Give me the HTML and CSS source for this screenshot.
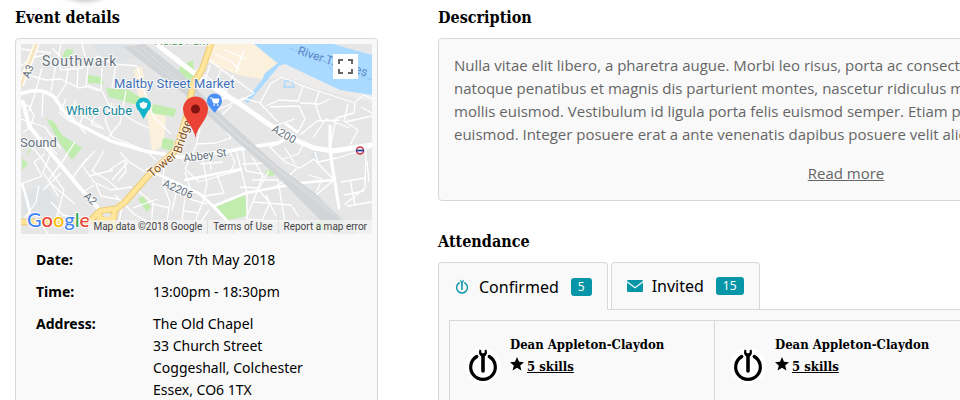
FILE: index.html
```html
<!DOCTYPE html>
<html lang="en">
<head>
<meta charset="utf-8">
<title>Event</title>
<link rel="stylesheet" href="styles.css">
</head>
<body>
<svg class="symbols" aria-hidden="true">
  <symbol id="power" viewBox="0 0 36 36">
    <path d="M11.8 8.5A12.3 12.3 0 1 0 24.2 8.5" fill="none" stroke="currentColor" stroke-width="3.2" stroke-linecap="round"/>
    <path d="M18 8V23" fill="none" stroke="currentColor" stroke-width="3.6" stroke-linecap="round"/>
    <path d="M14.6 1.6C13.3 4.8 14.3 8.6 18 8.8C21.7 8.6 22.7 4.8 21.4 1.6L19.7 2.2V4.6L18 5.4L16.3 4.6V2.2Z" fill="currentColor"/>
  </symbol>
  <symbol id="star" viewBox="0 0 14 14">
    <path d="M7 0L9 4.8L14 5.2L10.2 8.5L11.4 13.5L7 10.8L2.6 13.5L3.8 8.5L0 5.2L5 4.8Z" fill="currentColor"/>
  </symbol>
</svg>
<div class="page">
  <div class="header-shadow"></div>
  <section class="details">
    <h2>Event details</h2>
    <div class="panel details-panel">
      <div class="map">
        <svg class="map-art" viewBox="21 44 351 190" role="img" aria-label="Map">
          <rect x="21" y="44" width="351" height="190" fill="#e6e6e6"/>
          <g fill="#dfe3e6">
            <path d="M92 44H128L139 55L119 65L100 56ZM22 190L45 187L58 202L54 220L22 213Z"/>
            <path d="M313 150L322 152L320 163L309 157Z"/>
          </g>
          <path d="M274 63L285 62L310 71L330 81L372 94V102L346 96L315 88L285 76L270 79Z" fill="#eeeceb"/>
          <g fill="#fbf1dd">
            <path d="M211 44H254L277 64L266 80L238 75L203 60Z"/>
            <path d="M134 70L142 66L148 101L166 115L164 145L152 152L148 120L139 99Z"/>
          </g>
          <g fill="#c0ecae">
            <path d="M66 49L74 50L68 59L62 57ZM88 75L101 77L104 84L88 83ZM106 88L128 90L143 99L141 106L109 97Z"/>
            <path d="M153 104L176 109L174 117L151 113ZM180 67L193 60L195 79L184 82L178 74Z"/>
            <path d="M46 118L54 122L62 135L82 148L72 160L59 142ZM22 158L28 164L22 170ZM27 152L32 147L30 151L26 155Z"/>
            <path d="M163 138L174 140L172 151L161 148ZM138 199L143 196L151 207L147 212ZM216 206L245 195L247 216L228 220Z"/>
            <path d="M265 172L271 168L275 175L268 176ZM315 222L325 222L328 230H315Z"/>
          </g>
          <path d="M254 44H333L372 55V95L340 90L285 64L279 66L248 103L245 101L262 80L265 73L278 63Z" fill="#aadaff"/>
          <path d="M285 81L292 81L294 87L284 87Z" fill="none" stroke="#aadaff" stroke-width="1.5"/>
          <path d="M289 48L310 56L372 80M324 60L335 74" fill="none" stroke="#86b8ea" stroke-width=".7" stroke-dasharray="5 2"/>

          <g fill="none" stroke="#fff" stroke-width="1.3" stroke-linejoin="round">
            <path d="M21 66L31 58L44 55L58 62L61 70L82 68L98 56L113 64L137 66L143 87L153 116L171 134"/>
            <path d="M28 75L46 80L61 79L79 88L90 86L102 91L109 105L134 121L149 128M42 68L36 90M56 64L51 91M68 70L66 84L55 101M78 69L77 88M88 65L86 86L99 91M52 48L61 57M61 44L57 62M82 44L86 60M102 68L101 90M116 64L112 88"/>
            <path d="M59 109L84 116L104 129M66 99L60 113L69 121M76 100L71 116L86 134M88 105L80 123M101 106L91 124L100 128M112 103L105 120L112 137L145 150L156 160M126 91L120 123L106 140"/>
            <path d="M21 104L29 106L34 116L30 128L23 132M36 91L29 111M43 93L42 117M21 119L45 127L61 149M45 154L34 162L42 176L21 184M40 137L57 154M21 140L36 151L64 190M50 155L43 172L59 197M67 155L48 181L75 204M61 173L43 190M75 142L65 157M87 158L73 177L82 191M95 151L82 165L94 182L111 190L132 187"/>
            <path d="M104 151L92 171L106 179L119 190M120 152L128 161L145 172M109 170L125 160L126 171L118 181M89 176L113 170M96 184L101 196L121 200M82 193L94 185M128 162L112 180M115 195L135 215L149 222L156 231M122 207L119 222M137 190L153 203L151 227M133 208L157 199M51 202L63 215L81 219M39 186L36 202L22 222M64 190L55 224M34 213L48 234"/>
            <path d="M21 49L51 53M204 56L225 72L254 93L237 103M196 70L218 84L235 101M210 65L205 80L191 81M221 70L214 85M233 75L226 92M244 50L236 72M225 50L246 59M215 54L231 61L239 70M196 90L217 110L243 98L260 103L278 122M232 105L218 119"/>
            <path d="M260 103L271 83L282 77L303 86L298 101L279 100L266 106M270 107L299 106L305 119L298 132M303 86L318 91L355 103L354 113L336 118L330 149M300 103L320 104L330 99M319 92L315 103L321 121M348 104L344 121L358 130L350 145M355 102L364 95L372 99M300 135L317 121L340 120M313 138L326 119L350 128M295 119L274 126M361 107L372 113M345 122L372 116"/>
            <path d="M200 128L196 146L185 169L199 182L216 177L241 170M197 144L216 143L231 138L220 122M202 155L207 184L204 196M200 164L223 162M209 152L211 170M229 150L235 162L230 173M236 150L247 193L247 220M217 175L224 193L204 196M242 144L246 171L263 174L255 197L246 218M242 164L270 163L287 180L272 188L245 193M252 180L278 180L285 223M252 157L264 178M269 171L259 188L240 187M257 188L270 203L261 222"/>
            <path d="M281 143L270 147L285 162L300 168L314 159L334 180L316 195L294 183M303 145L298 154L283 159M285 148L295 164M315 152L318 162L337 158L370 148M297 168L281 184M309 175L322 179L317 191M330 159L334 182M344 205L365 188L366 150M341 182L365 178M344 195L364 191M347 206L372 202M350 180L355 205M367 161L369 182"/>
            <path d="M254 202L291 205L299 217M266 195L276 216M185 172L190 188M164 165L163 184L170 202L166 228M178 185L172 211M153 204L169 208M186 189L181 229M205 197L196 219L201 228M209 210L199 224M189 199L207 204M246 219L285 222M184 211L199 213"/>
          </g>
          <g fill="none" stroke="#fff" stroke-linecap="round" stroke-linejoin="round">
            <path d="M20 94Q41 86 54 97L66 114L72 121L111 141L145 151L181 157L223 152L251 147L278 143L292 135" stroke-width="3.5"/>
            <path d="M23 102L29 126L46 147L80 188L99 209" stroke-width="4"/>
            <path d="M159 46L190 70L219 91L240 104L267 123L288 137L314 148L333 151L372 145" stroke-width="5"/>
            <path d="M330 126L330 150L339 208M147 169L200 194L214 207L228 222L239 233M286 124L297 132M227 96L211 106L203 116" stroke-width="3"/>
            <path d="M214 206L246 193L300 183L333 180M185 180L220 173L241 169M22 184Q29 204 31 221" stroke-width="2.5"/>
          </g>
          <path d="M36 44L20 86M211 44L202 68L193 82" fill="none" stroke="#f6e5be" stroke-width="6"/>
          <path d="M34 44L19 84M39 44L23 86" fill="none" stroke="#fff" stroke-width="1.500"/>
          <path d="M123 47L145 44L178 70L223 116L278 166L316 194L357 234H334L275 174L242 146L183 93Z" fill="#d2d5d8"/>
          <path d="M133 47L178 82L227 127L281 173L351 228M141 47L187 86L239 138L291 179L348 222" fill="none" stroke="#e2e4e6" stroke-width=".7"/>
          <g fill="none" stroke-linecap="round" stroke-linejoin="round">
            <path d="M211 44L202 70L193 84L187 115L176 150L147 177L125 202L115 210L112 229M21 222L90 221L100 211L114 209M98 213L101 220L113 217" stroke="#edca75" stroke-width="6.5"/>
            <path d="M211 44L202 70L193 84L187 115L176 150L147 177L125 202L115 210L112 229M21 222L90 221L100 211L114 209M98 213L101 220L113 217" stroke="#ffe69a" stroke-width="4.5"/>
          </g>
          <ellipse cx="107" cy="215" rx="4" ry="2" fill="#e6e6e6"/>
          <circle cx="360" cy="150.500" r="3.500" fill="#fff" stroke="#d1344a" stroke-width="1.5"/>
          <path d="M356 150.500H364" stroke="#20459c" stroke-width="1.8"/>

          <g class="map-label">
            <text x="42" y="66" font-size="14" letter-spacing="1">Southwark</text>
            <text x="20" y="147" font-size="13">Sound</text>
            <text x="29" y="79" font-size="11" transform="rotate(-68 29 79)">A3</text>
            <text x="83" y="197" font-size="11" transform="rotate(42 83 197)">A2</text>
            <text x="271" y="131" font-size="11" transform="rotate(30 271 131)">A200</text>
            <text x="162" y="186" font-size="11" transform="rotate(24 162 186)">A2206</text>
            <text x="184" y="162" font-size="11" transform="rotate(-8 184 162)">Abbey St</text>
            <text class="blue" x="114" y="88" font-size="13">Maltby Street Market</text>
            <text class="teal" x="66" y="115" font-size="13">White Cube</text>
            <text class="river" x="297" y="54" font-size="12" transform="rotate(18 297 54)">River Thames</text>
            <text class="brown" x="152" y="178" font-size="12" transform="rotate(-40 152 178)">Tower</text>
            <text class="brown" x="181" y="154" font-size="12" transform="rotate(-72 181 154)">Bridge</text>
            <text class="green" x="154" y="45" font-size="11">Fields Park</text>
          </g>
          <path d="M143.500 119L139 111A7.500 7.500 0 1 1 148 111Z" fill="#12b5cb"/>
          <path d="M140 105a1.400 1.400 0 1 1 2-2a1.400 1.400 0 1 1 3 0a1.400 1.400 0 1 1 2 2C147 110 140 110 140 105Z" fill="#fff"/>
          <path d="M214.500 113L209 106A7.500 7.500 0 1 1 220 106Z" fill="#4a90f5"/>
          <path d="M210 98H212L213.500 103H218L219 99H212.500" fill="#fff" stroke="#fff"/>
          <path d="M213.500 105h1.400M217 105h1.400" stroke="#fff" stroke-width="1.500"/>
          <path d="M195.500 138C194 126 183 120 183 109A12.500 12.500 0 0 1 208 109C208 120 197 126 195.500 138Z" fill="#ea4335"/>
          <circle cx="195.500" cy="109" r="4.500" fill="#811411"/>
          <text class="logo" x="27" y="227"><tspan fill="#4285f4">G</tspan><tspan fill="#ea4335">o</tspan><tspan fill="#fbbc05">o</tspan><tspan fill="#4285f4">g</tspan><tspan fill="#34a853">l</tspan><tspan fill="#ea4335">e</tspan></text>
        </svg>
        <button class="fullscreen" type="button" aria-label="Full screen">
          <svg viewBox="0 0 15 15" width="15" height="15"><path d="M1 5V1H5M10 1H14V5M14 10V14H10M5 14H1V10" fill="none" stroke="#666" stroke-width="2"/></svg>
        </button>
        <div class="map-credits"><span>Map data ©2018 Google</span><a href="#">Terms of Use</a><a href="#">Report a map error</a></div>
      </div>
      <dl class="facts">
        <dt>Date:</dt><dd>Mon 7th May 2018</dd>
        <dt>Time:</dt><dd>13:00pm - 18:30pm</dd>
        <dt>Address:</dt><dd>The Old Chapel<br>33 Church Street<br>Coggeshall, Colchester<br>Essex, CO6 1TX</dd>
      </dl>
    </div>
  </section>
  <div class="main">
    <section>
      <h2>Description</h2>
      <div class="panel description">
        <p>Nulla vitae elit libero, a pharetra augue. Morbi leo risus, porta ac consectetur ac, vestibulum at eros. Cum sociis natoque penatibus et magnis dis parturient montes, nascetur ridiculus mus. Etiam porta sem malesuada magna mollis euismod. Vestibulum id ligula porta felis euismod semper. Etiam porta sem malesuada magna mollis euismod. Integer posuere erat a ante venenatis dapibus posuere velit aliquet.</p>
        <a class="more" href="#">Read more</a>
      </div>
    </section>
    <section>
      <h2 class="attendance-title">Attendance</h2>
      <div class="tabs" role="tablist">
        <button class="tab selected" type="button" role="tab" aria-selected="true"><svg class="tab-icon"><use href="#power"/></svg>Confirmed<span class="count">5</span></button>
        <button class="tab" type="button" role="tab" aria-selected="false"><svg class="tab-icon" viewBox="0 0 16 16"><path d="M0 3A1 1 0 0 1 1 2H15A1 1 0 0 1 16 3L8 9Z" fill="currentColor"/><path d="M0 4.500L8 10.500L16 4.500V13A1 1 0 0 1 15 14H1A1 1 0 0 1 0 13Z" fill="currentColor"/></svg>Invited<span class="count">15</span></button>
      </div>
      <div class="tab-panel">
        <ul class="people">
          <li><svg class="avatar"><use href="#power"/></svg><div><h3>Dean Appleton-Claydon</h3><svg class="star"><use href="#star"/></svg><a href="#">5 skills</a></div></li>
          <li><svg class="avatar"><use href="#power"/></svg><div><h3>Dean Appleton-Claydon</h3><svg class="star"><use href="#star"/></svg><a href="#">5 skills</a></div></li>
          <li></li>
        </ul>
      </div>
    </section>
  </div>
</div>
</body>
</html>
```
FILE: styles.css
```css
* { box-sizing: border-box; }

body {
  margin: 0;
  height: 100vh;
  overflow: hidden;
  background: #fff;
  color: #000;
  font: 14px/22px "Noto Sans", "Open Sans", sans-serif;
}

.symbols { display: none; }

.page {
  position: relative;
  display: grid;
  grid-template-columns: 363fr 816fr;
  gap: 60px;
  min-width: 1269px;
  padding: 6px 15px 0;
}

.header-shadow {
  position: absolute;
  top: -76px;
  left: 45px;
  width: 80px;
  height: 76px;
  border-radius: 50%;
  box-shadow: 0 0 6px rgba(0, 0, 0, .4);
}

h2, h3 {
  margin: 0;
  font-family: "DejaVu Serif Condensed", "DejaVu Serif", serif;
  font-weight: 700;
}

h2 { font-size: 16px; line-height: 24px; margin-bottom: 8px; }

.panel {
  border: 1px solid #d8d8d8;
  border-radius: 4px;
  background: #f9f9f9;
}

.details-panel { padding: 5px; }

.map { position: relative; }
.map-art { display: block; width: 100%; }

.map-label {
  font-family: Roboto, sans-serif;
  fill: #64717c;
  stroke: #fff;
  stroke-width: 2px;
  stroke-opacity: .75;
  paint-order: stroke;
}
.map-label .blue { fill: #4272b9; }
.map-label .teal { fill: #14899c; }
.map-label .river { fill: #5b87c7; stroke: none; }
.map-label .brown { fill: #85511c; }
.map-label .green { fill: #3d9a4c; }

.logo {
  font: 500 20px Lato, sans-serif;
  stroke: #fff;
  stroke-width: 2px;
  paint-order: stroke;
}

.fullscreen {
  position: absolute;
  top: 10px;
  right: 14px;
  display: grid;
  place-items: center;
  width: 25px;
  height: 25px;
  padding: 0;
  border: 0;
  background: #fff;
}

.map-credits {
  position: absolute;
  right: 0;
  bottom: 0;
  display: flex;
  background: rgba(245, 245, 245, .7);
  color: #444;
  font: 10px/14px Roboto, sans-serif;
  white-space: nowrap;
}
.map-credits > * { padding: 0 5px; color: inherit; text-decoration: none; }
.map-credits a { border-left: 1px solid #ddd; }

.facts {
  display: grid;
  grid-template-columns: 117px 1fr;
  row-gap: 10px;
  margin: 0;
  padding: 15px;
}
.facts dt { font-weight: 700; }
.facts dd { margin: 0; }

.description {
  padding: 15px;
  color: #666;
  font-family: "Open Sans", sans-serif;
  font-size: 15px;
  line-height: 23px;
}
.description p { margin: 0 0 16px; }
.more { display: block; width: fit-content; margin: 0 auto; color: inherit; }

.attendance-title { margin: 29px 0 8px; }

.tabs { display: flex; gap: 3px; }

.tab {
  display: flex;
  align-items: center;
  height: 47px;
  padding: 0 15px;
  border: 1px solid #d8d8d8;
  border-bottom: 0;
  border-radius: 4px 4px 0 0;
  background: #f9f9f9;
  color: #000;
  font: 16px/24px "Noto Sans", sans-serif;
}
.selected { position: relative; z-index: 1; margin-bottom: -1px; height: 48px; }
.tab-icon { width: 16px; height: 16px; margin-right: 9px; color: #0795a8; }
.selected .tab-icon { overflow: visible; stroke-width: 4px; }

.count {
  margin-left: 12px;
  padding: 0 7px;
  border-radius: 3px;
  background: #0795a8;
  color: #fff;
  font-size: 12px;
  line-height: 18px;
}

.tab-panel {
  padding: 10px;
  border: 1px solid #d8d8d8;
  background: #f9f9f9;
}

.people {
  display: grid;
  grid-template-columns: repeat(3, 1fr);
  min-height: 110px;
  margin: 0;
  padding: 0;
  border: 1px solid #d8d8d8;
  list-style: none;
}
.people li { display: flex; gap: 9px; padding: 13px 15px; }
.people li + li { border-left: 1px solid #d8d8d8; }
.avatar { width: 36px; height: 36px; margin-top: 14px; border-radius: 50%; background: #fff; }
.star { width: 14px; height: 14px; margin-right: 3px; }

.people h3 { font-size: 13px; line-height: 21px; white-space: nowrap; }
.people a {
  color: #000;
  font: 700 13px/20px "DejaVu Serif Condensed", "DejaVu Serif", serif;
}
```
